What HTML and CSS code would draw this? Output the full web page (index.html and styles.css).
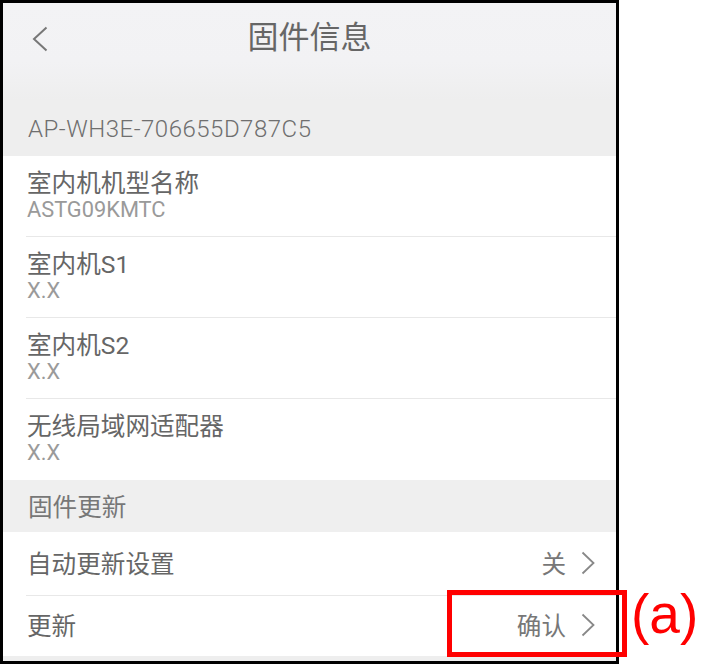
FILE: index.html
```html
<!DOCTYPE html>
<html lang="zh-CN">
<head>
<meta charset="utf-8">
<link rel="stylesheet" href="styles.css">
</head>
<body>
<div class="stage">
  <div class="phone">
    <header class="topbar">
      <svg class="back" viewBox="0 0 16 26" width="16" height="26"><path d="M14.5 1.5 L2 13 L14.5 24.5" fill="none" stroke="#777" stroke-width="2"/></svg>
      <h1 class="title">固件信息</h1>
    </header>
    <div class="band band-id">AP-WH3E-706655D787C5</div>
    <ul class="list">
      <li class="item"><div class="item-title">室内机机型名称</div><div class="item-sub">ASTG09KMTC</div></li>
      <li class="item"><div class="item-title">室内机S1</div><div class="item-sub">X.X</div></li>
      <li class="item"><div class="item-title">室内机S2</div><div class="item-sub">X.X</div></li>
      <li class="item"><div class="item-title">无线局域网适配器</div><div class="item-sub">X.X</div></li>
    </ul>
    <div class="band band-section">固件更新</div>
    <ul class="list">
      <li class="link link-first"><span class="link-label">自动更新设置</span><span class="link-value">关<svg class="chev" viewBox="0 0 14 24" width="14" height="24"><path d="M1.5 1.5 L12.5 12 L1.5 22.5" fill="none" stroke="#888" stroke-width="1.8"/></svg></span></li>
      <li class="link link-last"><span class="link-label">更新</span><span class="link-value">确认<svg class="chev" viewBox="0 0 14 24" width="14" height="24"><path d="M1.5 1.5 L12.5 12 L1.5 22.5" fill="none" stroke="#888" stroke-width="1.8"/></svg></span></li>
    </ul>
    <div class="foot"></div>
  </div>
  <div class="callout"></div>
  <div class="callout-label">(a)</div>
</div>
</body>
</html>
```

FILE: styles.css
```css
* { box-sizing: border-box; }
html, body { margin: 0; padding: 0; background: #fff; }
body { font-family: Roboto, "Noto Sans CJK SC", sans-serif; }
.stage { position: relative; width: 702px; height: 667px; }
.phone {
  width: 619px;
  height: 664px;
  border: 3px solid #000;
  background: #fff;
  display: flex;
  flex-direction: column;
  overflow: hidden;
}
.topbar {
  height: 97px;
  flex: none;
  background: linear-gradient(to bottom, #f3f3f5 0%, #f2f2f4 60%, #eeeeee 100%);
  display: flex;
  align-items: flex-start;
  padding: 20px 0 0 29px;
  position: relative;
}
.back { margin-top: 3px; flex: none; }
.title {
  margin: 0;
  position: absolute;
  left: 0; right: 0; top: 15px;
  text-align: center;
  font-weight: 400;
  font-size: 31px;
  line-height: 40px;
  color: #666;
  pointer-events: none;
}
.band {
  flex: none;
  background: #eeeeee;
  color: #777;
  padding-left: 25px;
  display: flex;
  align-items: center;
}
.band-id { height: 56px; font-size: 24px; letter-spacing: 0.5px; padding-top: 2px; font-weight: 300; color: #6f6f6f; }
.band-section { height: 52px; font-size: 24.6px; background: #efefef; padding-bottom: 2px; }
.list { list-style: none; margin: 0; padding: 0 0 0 23px; flex: none; }
.item {
  padding: 13px 0 15px 1px;
  border-bottom: 1px solid #e8e8e8;
}
.item:last-child { border-bottom: 0; padding-bottom: 16px; }
.item-title { font-size: 24.6px; line-height: 30px; color: #666; }
.item-sub { font-size: 21.8px; line-height: 22px; color: #9a9a9a; }
.link {
  display: flex;
  align-items: center;
  justify-content: space-between;
  padding: 0 21px 4px 1px;
  font-size: 24.6px;
  color: #666;
}
.link-first { height: 64px; border-bottom: 1px solid #e8e8e8; }
.link-last { height: 60px; }
.link-value { display: flex; align-items: center; gap: 15px; color: #777; }
.chev { flex: none; margin-top: 2px; }
.foot { flex: 1; background: #eeeeee; }
.callout {
  position: absolute;
  left: 447px; top: 590px;
  width: 180px; height: 67px;
  border: 5px solid #ff0000;
}
.callout-label {
  position: absolute;
  left: 631px; top: 587px;
  font-family: "Liberation Sans", Arial, sans-serif;
  font-size: 55px;
  line-height: 54px;
  color: #ff0000;
}
```
